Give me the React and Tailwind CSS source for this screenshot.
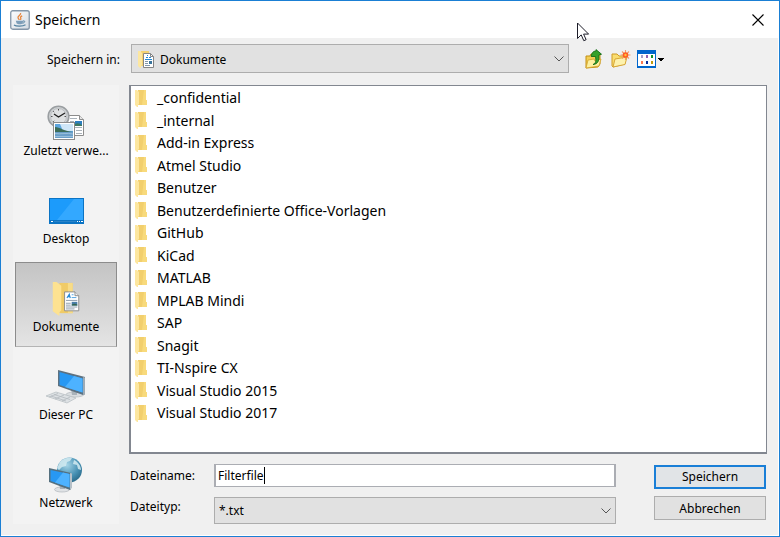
import React from "react";

const folders = [
  "_confidential",
  "_internal",
  "Add-in Express",
  "Atmel Studio",
  "Benutzer",
  "Benutzerdefinierte Office-Vorlagen",
  "GitHub",
  "KiCad",
  "MATLAB",
  "MPLAB Mindi",
  "SAP",
  "Snagit",
  "TI-Nspire CX",
  "Visual Studio 2015",
  "Visual Studio 2017",
];

function JavaIcon() {
  return (
    <svg width="20" height="20" viewBox="0 0 20 20" aria-hidden="true">
      <defs>
        <linearGradient id="javaBg" x1="0" y1="0" x2="1" y2="1">
          <stop offset="0" stopColor="#fdfdfe" />
          <stop offset="1" stopColor="#d3dae2" />
        </linearGradient>
      </defs>
      <rect x=".75" y=".75" width="18.5" height="18.5" rx="2" fill="url(#javaBg)" stroke="#8496a8" strokeWidth="1.3" />
      <path d="M10.6 3c.8 1.8-3.2 2.9-2.6 4.7.3 1 1.2 1.4 1.2 2.3M12.2 5.8c-1.5.6-2 1.3-1.5 2.2.4.7.2 1.300-.3 1.900" fill="none" stroke="#e8853c" strokeWidth="1.3" />
      <path d="M5.8 10.800h7.400l-.6 2.800c-1 1-4.800 1-5.900 0z" fill="#7d9db8" />
      <path d="M13 11c2.400-.6 2.400 1.600-.4 2.200" fill="none" stroke="#5382a1" />
      <path d="M4 15c2 1.500 9 1.500 11.500-.2" fill="none" stroke="#5382a1" strokeWidth="1.2" />
    </svg>
  );
}

function FolderIcon() {
  return (
    <svg width="13" height="17" viewBox="0 0 13 17" aria-hidden="true">
      <path d="M3 0h8v10h1v5H3z" fill="#f2cf6d" />
      <path d="M9 0h2v10h1v5H7z" fill="#f8da7c" />
      <path d="M0 0h2l2 2v12l-1 1v2H2l-2-2z" fill="#fde7a0" />
    </svg>
  );
}

function PageShape() {
  return (
    <>
      <path d="M.5.5h11l4 4v16H.5z" fill="#fff" stroke="#8a8a8a" />
      <path d="M11.5.5v4h4" fill="#eee" stroke="#8a8a8a" />
      <path d="m3 7 2.500-4L6.500 7M4 5.500h2" fill="none" stroke="#2389d6" strokeWidth="1.2" />
      <path d="M8 3.500h2M8 6.500h5" stroke="#4d9fe0" />
      <path d="M2 9.500h12M2 12.500h5M2 14.500h5M2 16.500h12M2 18.500h9" stroke="#8b9bab" />
      <path d="M8 11h6v4H8z" fill="#4a7ea8" />
      <path d="M8 14q3-2 6 0v1H8z" fill="#35654f" />
    </>
  );
}

function DocumentsIcon({ className }) {
  return (
    <svg className={className} viewBox="0 0 28 36" aria-hidden="true">
      <path d="M7 1h14v32H7z" fill="#f0cb66" />
      <path d="M16 1h5v32h-5z" fill="#f8dc86" />
      <path d="M0 0h4l5 4v26l-2 2v4L0 31z" fill="#fde291" />
      <g transform="translate(12 10)">
        <PageShape />
      </g>
    </svg>
  );
}

function SmallDocumentsIcon() {
  return (
    <svg className="pointer-events-none absolute top-[7px] left-[7px]" width="16" height="17" viewBox="0 0 16 17" aria-hidden="true">
      <path d="M3 0h8v15H3z" fill="#f3d272" />
      <path d="M0 0h2l2 2v12l-1 1v2H2l-2-2z" fill="#fde7a0" />
      <path d="M5.500 2.500h7l3 3v11h-10z" fill="#fff" stroke="#858585" />
      <path d="M12.500 2.500v3h3" fill="none" stroke="#858585" />
      <path d="M8 6.500h2M9 4.500h1M11 6.500h2M7 8.500h7" stroke="#2389d6" />
      <path d="M7 10.500h3M7 12.500h3M7 14.500h5" stroke="#8196aa" />
      <path d="M11 10h3v3h-3z" fill="#39749c" />
    </svg>
  );
}

function RecentIcon() {
  return (
    <svg width="38" height="36" viewBox="0 0 38 36" aria-hidden="true">
      <path d="M20.500 10.500h12l4 4v16h-16z" fill="#fff" stroke="#8c8c8c" />
      <path d="M32.500 10.500v4h4" fill="#e6e6e6" stroke="#8c8c8c" />
      <path d="M23 13.500h7M23 16.500h4M23 22.500h12M29 25.500h6M29 28.500h6" stroke="#a9b2ba" />
      <path d="M28 16h7v5h-7z" fill="#2d7fc0" />
      <path d="M28 19q3-2 7 1v1h-7z" fill="#3d7861" />
      <circle cx="11.5" cy="11.5" r="10.3" fill="#cfd2d4" stroke="#9a9ea1" strokeWidth="1.6" />
      <circle cx="11.5" cy="11.5" r="8" fill="#dfe1e2" stroke="#b4b8bb" strokeWidth=".8" />
      <path d="M11.500 4v1.500M11.500 17.500V19M4 11.500h1.500M17.500 11.500H19M6.200 6.200l1 1M6.200 16.800l1-1" stroke="#555" />
      <path d="m7 9 4.500 3L18 8" fill="none" stroke="#222" strokeWidth="1.4" />
      <rect x="6.5" y="17.5" width="21" height="17" fill="#fff" stroke="#8c8c8c" />
      <path d="M8 19h18v14H8z" fill="#5ea6de" />
      <path d="M13 19h13v7H16z" fill="#cfe6f7" />
      <path d="M8 22c5 0 8 4 18 5v1H8z" fill="#3c6d59" />
      <path d="M8 27h18v6H8z" fill="#6a9ec8" />
      <path d="M8 28.500c6 1 12-1 18 .5M8 31.500h18" fill="none" stroke="#a5c8e0" strokeWidth=".8" />
    </svg>
  );
}

function DesktopIcon() {
  return (
    <svg width="35" height="26" viewBox="0 0 35 26" aria-hidden="true">
      <path d="M0 0h35v26H0z" fill="#0b74c4" />
      <path d="M1 1h33v21H1z" fill="#1c9bfb" />
      <path d="M25 1h9v21H8z" fill="#33a8ff" />
      <path d="M2 23h2v1H2zM28 23h1v1h-1zM30 23h1v1h-1zM32 23h2v1h-2z" fill="#fff" />
      <path d="M5 23h22v1H5z" fill="#2a83c8" />
    </svg>
  );
}

function ComputerIcon() {
  return (
    <svg width="40" height="36" viewBox="0 0 40 36" aria-hidden="true">
      <ellipse cx="29" cy="25.5" rx="9" ry="2.5" fill="#d9dde0" stroke="#b4babf" strokeWidth=".7" />
      <path d="m25 20 6 2v4h-5z" fill="#aab3ba" />
      <path d="m12 1 27 7v17l-2 1-25-9z" fill="#5d7180" />
      <path d="m37 8 2 .5v17l-2 .5z" fill="#9eabb5" />
      <path d="m13.500 3 23 6.500v14l-23-7.500z" fill="#2798f3" />
      <path d="m28 7 8.500 2.500v14L19 18z" fill="#4db2ff" />
      <path d="m0 27 10-4 20 6-9 5z" fill="#dde1e4" stroke="#b5bbc0" strokeWidth=".7" />
      <path d="m5 27 15 5M8 25.500l16 5M12 24.500 3 28M18 26l-9 4M24 28l-8 4" stroke="#b4babf" strokeWidth=".8" />
    </svg>
  );
}

function NetworkIcon() {
  return (
    <svg width="34" height="36" viewBox="0 0 34 36" aria-hidden="true">
      <defs>
        <radialGradient id="globe" cx=".4" cy=".3" r=".8">
          <stop offset="0" stopColor="#a5d4e6" />
          <stop offset=".6" stopColor="#4690b3" />
          <stop offset="1" stopColor="#24617f" />
        </radialGradient>
      </defs>
      <circle cx="20.5" cy="13" r="12.5" fill="url(#globe)" />
      <path d="M11 5c3-4 9-5 12-4l-2 3-3 1-1 4-4 1-3 3-2-2zM25 3c4 2 7 6 7 10l-3-1-1-4-4-1z" fill="#d4ebf1" opacity=".85" />
      <ellipse cx="13" cy="32.5" rx="7.5" ry="2.5" fill="#dfe2e5" stroke="#b0b6bb" strokeWidth=".7" />
      <path d="m10 26 6 2v4h-5z" fill="#a7b0b7" />
      <path d="m0 11 22 5v16l-1 1L0 25z" fill="#55707f" />
      <path d="m21 16 2 .5V31l-2 1.500z" fill="#b5c0c8" />
      <path d="m1.500 13 19 4v13.500L1.500 24z" fill="#2798f3" />
      <path d="m14 15.600 6.500 1.400v13.500L6 25.500z" fill="#4db2ff" />
    </svg>
  );
}

function Chevron() {
  return (
    <svg className="pointer-events-none absolute top-1/2 right-1 -translate-y-1/2" width="12" height="8" viewBox="0 0 12 8" aria-hidden="true">
      <path d="m1.500 1.500 4.500 4.500 4.500-4.500" fill="none" stroke="#555" />
    </svg>
  );
}

function UpFolderIcon() {
  return (
    <svg width="20" height="20" viewBox="0 0 20 20" aria-hidden="true">
      <path d="M1 7h4l1-2h9v10l-2 3-12 1z" fill="#f3cf55" stroke="#c28f16" />
      <path d="m1 19 2-8 6-1 1 2 6-2-2 7z" fill="#fdf0a0" stroke="#d3a229" strokeWidth=".8" />
      <path d="M8 15.500c3-1 3.200-4 2.500-8H6.200c.3-3.500 2-5.500 4.800-5.500V.6l5.500 4.600-2.800 1c.8 5-.7 9-5.700 9.300z" fill="#35a12b" stroke="#136d16" strokeWidth=".9" />
    </svg>
  );
}

function NewFolderIcon() {
  return (
    <svg width="20" height="18" viewBox="0 0 20 18" aria-hidden="true">
      <path d="M1 4h5l2 2h6v8L2 17 1 16z" fill="#f9dd70" stroke="#cf9b25" />
      <path d="m4 9 12-2-2 7.500L2 17z" fill="#fdf2ae" stroke="#d8a737" />
      <path d="M14.500 0v10M9.500 5h10M11 1.500l7 7M18 1.500l-7 7" stroke="#f29a68" strokeWidth="1.1" />
      <circle cx="14.5" cy="5" r="2.8" fill="#ff5a22" />
      <circle cx="14.5" cy="5" r="1.200" fill="#ffc23c" />
    </svg>
  );
}

function ViewIcon() {
  return (
    <svg width="28" height="18" viewBox="0 0 28 18" aria-hidden="true">
      <path d="M0 0h19v18H0z" fill="#0066cc" />
      <path d="M1 4h17v12H1z" fill="#fff" />
      <path d="M4 5h2v3H4z" fill="#a5a1c8" />
      <path d="M9 5h2v3H9z" fill="#8f62b0" />
      <path d="M14 5h2v3h-2z" fill="#12902a" />
      <path d="M4 11h2v3H4z" fill="#ff7a50" />
      <path d="M9 11h2v3H9z" fill="#0a2f9c" />
      <path d="M14 11h2v3h-2z" fill="#c09a10" />
      <path d="M21 8h6v1h-1v1h-1v1h-2v-1h-1V9h-1z" fill="#000" />
    </svg>
  );
}

const places = [
  { label: "Zuletzt verwe...", icon: <RecentIcon /> },
  { label: "Desktop", icon: <DesktopIcon /> },
  { label: "Dokumente", icon: <DocumentsIcon className="h-[34px] w-7" />, active: true },
  { label: "Dieser PC", icon: <ComputerIcon /> },
  { label: "Netzwerk", icon: <NetworkIcon /> },
];

export default function App() {
  return (
    <main className="relative flex min-h-screen flex-col border border-[#1a7fd4] bg-[#f0f0f0] font-['Noto_Sans',sans-serif] text-xs text-black">
      <header className="flex h-[37px] items-center bg-white pr-[11px] pl-[9px]">
        <JavaIcon />
        <h1 className="ml-[5px] flex-1 text-sm">Speichern</h1>
        <button type="button" aria-label="Schließen" className="p-1">
          <svg width="12" height="12" viewBox="0 0 12 12" aria-hidden="true">
            <path d="m.5.500 11 11M11.500.500l-11 11" stroke="#000" strokeWidth="1.100" />
          </svg>
        </button>
      </header>

      <div className="flex flex-1 flex-col border-r border-b border-white pt-1.5 pr-[11px] pb-[11px] pl-3">
        <div className="flex items-center">
          <label htmlFor="location" className="w-[107px] pt-0.5 text-right">Speichern in:</label>
          <div className="relative ml-[11px] flex-1">
            <SmallDocumentsIcon />
            <select id="location" className="block h-[29px] w-full appearance-none border border-[#adadad] bg-[#e1e1e1] pt-0.5 pr-6 pl-7">
              <option>Dokumente</option>
            </select>
            <Chevron />
          </div>
          <div className="ml-4 flex w-[182px] items-center gap-1.5">
            <button type="button" aria-label="Übergeordneter Ordner"><UpFolderIcon /></button>
            <button type="button" aria-label="Neuer Ordner"><NewFolderIcon /></button>
            <button type="button" aria-label="Ansicht"><ViewIcon /></button>
          </div>
        </div>

        <div className="mt-3 flex flex-1 gap-2.5">
          <nav className="flex w-[106px] flex-col gap-[3px] bg-[#f3f3f3] px-0.5 pt-px">
            {places.map((p) => (
              <button
                key={p.label}
                type="button"
                className={
                  "flex h-[85px] flex-col items-center justify-end border pb-[9px] " +
                  (p.active
                    ? "border-[#8c8c8c] border-b-[#b4b4b4] bg-linear-to-b from-[#c4c4c4] to-[#e4e4e4]"
                    : "border-transparent")
                }
              >
                <span className="flex h-9 items-center">{p.icon}</span>
                <span className="leading-5">{p.label}</span>
              </button>
            ))}
          </nav>

          <div className="flex flex-1 flex-col">
            <ul className="flex-1 border-t border-r border-b-2 border-l-2 border-[#828790] bg-white pt-px text-sm">
              {folders.map((name) => (
                <li key={name} className="flex items-center gap-[9px] pl-1 odd:h-[22px] even:h-[23px]">
                  <FolderIcon />
                  <span>{name}</span>
                </li>
              ))}
            </ul>

            <form className="mt-2.5 flex items-start" onSubmit={(e) => e.preventDefault()}>
              <div className="grid flex-1 grid-cols-[85px_1fr] gap-y-2.5">
                <label htmlFor="filename" className="pt-1 pl-px">Dateiname:</label>
                <div className="flex h-[23px] items-center border-x-2 border-y border-[#abadb3] bg-white pl-0.5">
                  <input id="filename" type="text" defaultValue="Filterfile" className="field-sizing-content outline-none" />
                  <span className="h-[17px] w-px bg-black" />
                </div>
                <label htmlFor="filetype" className="pt-0.5 pl-px">Dateityp:</label>
                <div className="relative">
                  <select id="filetype" className="block h-[27px] w-full appearance-none border border-[#adadad] bg-[#e1e1e1] pr-6 pl-1">
                    <option>*.txt</option>
                  </select>
                  <Chevron />
                </div>
              </div>
              <div className="mt-px mr-px ml-[38px] flex w-28 flex-col gap-[7px]">
                <button type="submit" className="h-6 border-2 border-[#1a7fd7] bg-[#e1e4e7]">Speichern</button>
                <button type="button" className="h-6 border border-[#adadad] bg-[#e1e1e1] pt-0.5">Abbrechen</button>
              </div>
            </form>
          </div>
        </div>
      </div>

      <svg className="pointer-events-none absolute top-[21px] left-[576px]" width="13" height="20" viewBox="0 0 13 20" aria-hidden="true">
        <path d="M.5 1v15.500l3.700-3.600 2.600 5.800 2.300-1-2.500-5.600h5z" fill="#fff" stroke="#1c1c28" />
      </svg>
    </main>
  );
}
